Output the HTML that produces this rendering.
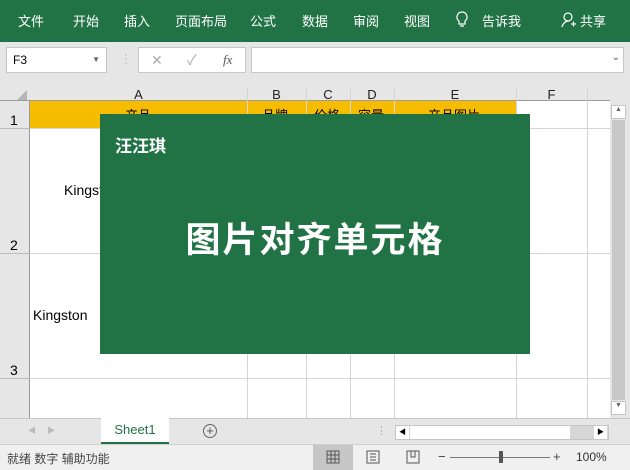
<!DOCTYPE html>
<html><head><meta charset="utf-8"><style>
*{margin:0;padding:0;box-sizing:border-box}
body{width:630px;height:470px;overflow:hidden;background:#fff;font-family:"Liberation Sans","Noto Sans CJK SC",sans-serif;position:relative;font-size:13px}
.a{position:absolute}
.tab{position:absolute;top:11px;color:#fff;font-size:13px}
.vl{position:absolute;top:88px;width:1px;height:330px;background:#d4d4d4}
.hl{position:absolute;left:30px;width:580px;height:1px;background:#d4d4d4}
.ch{position:absolute;top:88px;height:13px;font-size:13px;line-height:13px;text-align:center;color:#222}
</style></head><body>
<div class="a" style="left:0;top:0;width:630px;height:42px;background:#217346"></div>
<div class="tab" style="left:18px">文件</div>
<div class="tab" style="left:73px">开始</div>
<div class="tab" style="left:124px">插入</div>
<div class="tab" style="left:175px">页面布局</div>
<div class="tab" style="left:250px">公式</div>
<div class="tab" style="left:302px">数据</div>
<div class="tab" style="left:353px">审阅</div>
<div class="tab" style="left:404px">视图</div>
<svg class="a" style="left:456px;top:11px" width="12" height="18"><path d="M6 1a5 5 0 0 0-3 9v3h6v-3a5 5 0 0 0-3-9zM4 15h4" stroke="#fff" fill="none" stroke-width="1.2"/></svg>
<div class="tab" style="left:482px">告诉我</div>
<svg class="a" style="left:561px;top:11px" width="16" height="18"><circle cx="7" cy="6" r="4" stroke="#fff" fill="none" stroke-width="1.2"/><path d="M1 16c1-4 4-6 6-6M10 13h5M12.5 10.5v5" stroke="#fff" fill="none" stroke-width="1.2"/></svg>
<div class="tab" style="left:580px">共享</div>
<div class="a" style="left:0;top:42px;width:630px;height:46px;background:#e6e6e6"></div>
<div class="a" style="left:6px;top:47px;width:101px;height:26px;background:#fff;border:1px solid #c6c6c6;font-size:12px;line-height:24px;padding-left:6px">F3<span style="position:absolute;right:6px;font-size:8px;color:#666">▼</span></div>
<div class="a" style="left:120px;top:52px;color:#bbb;font-size:12px">⋮</div>
<div class="a" style="left:138px;top:47px;width:108px;height:26px;background:#fff;border:1px solid #c6c6c6;color:#aaa;font-size:14px;line-height:24px"><span style="position:absolute;left:12px">✕</span><span style="position:absolute;left:48px">✓</span><span style="position:absolute;left:84px;color:#555;font-style:italic;font-family:'Liberation Serif';font-size:13px">fx</span></div>
<div class="a" style="left:251px;top:47px;width:373px;height:26px;background:#fff;border:1px solid #c6c6c6"><span style="position:absolute;right:3px;top:4px;font-size:10px;color:#555">⌄</span></div>
<div class="a" style="left:0;top:88px;width:30px;height:330px;background:#e6e6e6;border-right:1px solid #9b9b9b"></div>
<div class="a" style="left:0;top:88px;width:610px;height:13px;background:#e6e6e6;border-bottom:1px solid #9b9b9b"></div>
<svg class="a" style="left:16px;top:90px" width="12" height="10"><path d="M11 0L11 10L1 10Z" fill="#b5b5b5"/></svg>
<div class="a" style="left:30px;top:101px;width:486px;height:27px;background:#f6bd00"></div>
<div class="vl" style="left:247px"></div><div class="vl" style="left:306px"></div><div class="vl" style="left:350px"></div><div class="vl" style="left:394px"></div><div class="vl" style="left:516px"></div><div class="vl" style="left:587px"></div>
<div class="hl" style="top:128px"></div><div class="hl" style="top:253px"></div><div class="hl" style="top:378px"></div>
<div class="a" style="left:0;top:128px;width:30px;height:1px;background:#bbb"></div>
<div class="a" style="left:0;top:253px;width:30px;height:1px;background:#bbb"></div>
<div class="a" style="left:0;top:378px;width:30px;height:1px;background:#bbb"></div>
<div class="ch" style="left:30px;width:217px">A</div><div class="ch" style="left:247px;width:59px">B</div><div class="ch" style="left:306px;width:44px">C</div><div class="ch" style="left:350px;width:44px">D</div><div class="ch" style="left:394px;width:122px">E</div><div class="ch" style="left:516px;width:71px">F</div>
<div class="a" style="left:10px;top:112px;font-size:14px">1</div>
<div class="a" style="left:10px;top:237px;font-size:14px">2</div>
<div class="a" style="left:10px;top:362px;font-size:14px">3</div>
<div class="a" style="left:125px;top:105px;font-size:13px">产品</div>
<div class="a" style="left:262px;top:105px;font-size:13px">品牌</div>
<div class="a" style="left:314px;top:105px;font-size:13px">价格</div>
<div class="a" style="left:358px;top:105px;font-size:13px">容量</div>
<div class="a" style="left:428px;top:105px;font-size:13px">产品图片</div>
<div class="a" style="left:64px;top:182px;font-size:14px">Kingston</div>
<div class="a" style="left:33px;top:307px;font-size:14px">Kingston</div>
<div class="a" style="left:100px;top:114px;width:430px;height:240px;background:#217346"></div>
<div class="a" style="left:115px;top:132px;color:#fff;font-size:17px;font-weight:bold">汪汪琪</div>
<div class="a" style="left:100px;top:212px;width:430px;text-align:center;color:#fff;font-size:35px;font-weight:bold;letter-spacing:2px">图片对齐单元格</div>
<div class="a" style="left:610px;top:88px;width:20px;height:330px;background:#e6e6e6"></div>
<div class="a" style="left:611px;top:105px;width:15px;height:14px;background:#fff;border:1px solid #c6c6c6;font-size:7px;text-align:center;color:#666">▲</div>
<div class="a" style="left:612px;top:120px;width:13px;height:280px;background:#c8c8c8"></div>
<div class="a" style="left:611px;top:401px;width:15px;height:14px;background:#fff;border:1px solid #c6c6c6;font-size:7px;text-align:center;color:#666">▼</div>
<div class="a" style="left:0;top:418px;width:630px;height:26px;background:#e6e6e6;border-top:1px solid #c6c6c6"></div>
<div class="a" style="left:28px;top:425px;font-size:8px;color:#bbb">◀&nbsp;&nbsp;&nbsp;&nbsp;&nbsp;▶</div>
<div class="a" style="left:101px;top:418px;width:68px;height:26px;background:#fff;border-bottom:2px solid #217346;color:#217346;text-align:center;line-height:24px;font-size:13px">Sheet1</div>
<div class="a" style="left:203px;top:424px;width:14px;height:14px;border:1px solid #666;border-radius:50%;text-align:center;line-height:12px;font-size:13px;color:#555">+</div>
<div class="a" style="left:376px;top:424px;color:#aaa;font-size:11px">⋮</div>
<div class="a" style="left:395px;top:425px;width:214px;height:15px;background:#d6d6d6;border:1px solid #c6c6c6"></div>
<div class="a" style="left:410px;top:426px;width:160px;height:13px;background:#fff"></div>
<div class="a" style="left:396px;top:426px;width:13px;height:13px;background:#fff;font-size:7px;line-height:13px;text-align:center">◀</div>
<div class="a" style="left:594px;top:426px;width:13px;height:13px;background:#fff;font-size:7px;line-height:13px;text-align:center">▶</div>
<div class="a" style="left:0;top:444px;width:630px;height:26px;background:#f0f0f0;border-top:1px solid #d0d0d0"></div>
<div class="a" style="left:7px;top:450px;font-size:12px;color:#444">就绪 数字 辅助功能</div>
<div class="a" style="left:313px;top:445px;width:40px;height:25px;background:#c6c6c6"></div>
<svg class="a" style="left:326px;top:450px" width="14" height="14"><path d="M1 1h12v12H1zM5 1v12M9 1v12M1 5h12M1 9h12" stroke="#555" fill="none"/></svg>
<svg class="a" style="left:366px;top:450px" width="14" height="14"><path d="M1 1h12v12H1zM4 4h6M4 7h6M4 10h6" stroke="#555" fill="none"/></svg>
<svg class="a" style="left:406px;top:450px" width="14" height="14"><path d="M1 1h12v12H1zM5 1v6h4V1" stroke="#555" fill="none"/></svg>
<div class="a" style="left:438px;top:449px;font-size:13px;color:#444">−</div>
<div class="a" style="left:450px;top:457px;width:100px;height:1px;background:#777"></div>
<div class="a" style="left:499px;top:451px;width:4px;height:12px;background:#555"></div>
<div class="a" style="left:553px;top:449px;font-size:13px;color:#444">+</div>
<div class="a" style="left:576px;top:450px;font-size:12px;color:#333">100%</div>
</body></html>
